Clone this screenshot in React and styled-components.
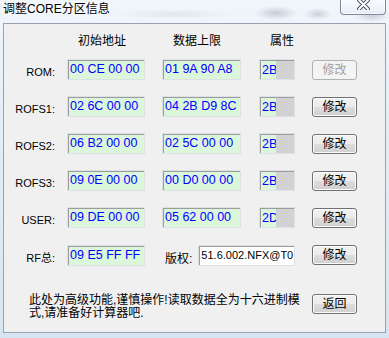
import React from "react";
import styled, { createGlobalStyle } from "styled-components";

const Global = createGlobalStyle`
  html, body { margin: 0; padding: 0; }
  body { width: 389px; height: 338px; overflow: hidden; font-family: "Liberation Sans", "Noto Sans CJK SC", sans-serif; }
`;

const CJK = `"Liberation Sans", "Noto Sans CJK SC", sans-serif`;

const Frame = styled.div`
  width: 389px;
  height: 338px;
  display: flex;
  flex-direction: column;
  box-sizing: border-box;
  background:
    radial-gradient(ellipse 22px 7px at 276px 13px, rgba(90,105,125,0.28), transparent),
    radial-gradient(ellipse 14px 6px at 318px 14px, rgba(90,105,125,0.25), transparent),
    radial-gradient(ellipse 18px 6px at 372px 16px, rgba(90,105,125,0.25), transparent),
    radial-gradient(ellipse 60px 5px at 175px 14px, rgba(110,125,145,0.12), transparent),
    linear-gradient(180deg, #f1f6fb 0%, #e3edf6 40%, #d7e5f2 100%);
`;

const TitleBar = styled.div`
  height: 23px;
  display: flex;
  justify-content: space-between;
  align-items: flex-start;
  flex: none;
`;

const Title = styled.div`
  padding: 2px 0 0 3px;
  font: 12px/14px ${CJK};
  color: #000;
  text-shadow: 0 0 6px #fff, 0 0 3px #fff;
`;

const CloseButton = styled.div`
  width: 46px;
  height: 15px;
  margin-right: 3px;
  box-sizing: border-box;
  border: 1px solid #7d8898;
  border-top: none;
  border-radius: 0 0 4px 4px;
  background: linear-gradient(180deg, rgba(255,255,255,0.55), rgba(225,235,245,0.6));
  box-shadow: inset 0 -1px 0 rgba(255,255,255,0.7), inset 1px 0 0 rgba(255,255,255,0.6), inset -1px 0 0 rgba(255,255,255,0.6);
  display: flex;
  justify-content: center;
  align-items: flex-start;
`;

const Client = styled.div`
  flex: 1;
  margin: 0 3px 5px 3px;
  border: 1px solid #97a3b2;
  background: #f0f0f0;
  padding-top: 10px;
  display: flex;
  flex-direction: column;
  font: 12px/14px ${CJK};
  color: #000;
`;

const cols = "63px 95px 97px 53px 45px";

const HeaderRow = styled.div`
  display: grid;
  grid-template-columns: ${cols};
  height: 14px;
`;

const HeaderCell = styled.div`
  grid-column: ${(p) => p.col};
  padding-left: 11px;
  font-size: 12px;
  line-height: 14px;
`;

const Rows = styled.div`
  display: flex;
  flex-direction: column;
  gap: 16px;
  margin-top: 11px;
`;

const Row = styled.div`
  display: grid;
  grid-template-columns: ${cols};
  height: 21px;
  align-items: center;
`;

const Label = styled.div`
  text-align: right;
  padding-right: 12px;
  padding-top: 5px;
  font-size: 11px;
  line-height: 14px;
  white-space: nowrap;
`;

const Field = styled.div`
  width: ${(p) => p.w}px;
  height: 21px;
  box-sizing: border-box;
  border: 1px solid #dde1e6;
  box-shadow: inset 1px 1px 0 #9c9c9c;
  background: ${(p) => p.bg || "#dcf6dc"};
  color: ${(p) => p.color || "#0000ff"};
  font: ${(p) => p.fs || 12.5}px/19px "Liberation Sans", sans-serif;
  padding-left: 2px;
  white-space: nowrap;
  overflow: hidden;
  display: flex;
`;

const AttrText = styled.span`
  width: 14px;
  background: #dcf6dc;
  margin: 1px 0 0 0;
  line-height: 18px;
`;

const AttrRest = styled.span`
  flex: 1;
  background: #d2d2d2;
  margin: 1px 0 0 0;
`;

const Button = styled.button`
  width: 45px;
  height: 20px;
  box-sizing: border-box;
  padding: 0;
  border: 1px solid ${(p) => (p.disabled ? "#adb2b5" : "#707070")};
  border-radius: 3px;
  background: ${(p) =>
    p.disabled
      ? "#f4f4f4"
      : "linear-gradient(180deg, #f2f2f2 0%, #ebebeb 48%, #dddddd 52%, #cfcfcf 100%)"};
  box-shadow: inset 0 0 0 1px ${(p) => (p.disabled ? "#f4f4f4" : "#fcfcfc")};
  color: ${(p) => (p.disabled ? "#a0a0a0" : "#000")};
  font: 12px/16px ${CJK};
  justify-self: start;
`;

const CopyCell = styled.div`
  grid-column: 3 / span 2;
  display: flex;
  align-items: center;
  gap: 6px;
  padding-left: 3px;
`;

const CopyLabel = styled.span`
  font-size: 12px;
  padding-top: 8px;
`;

const Bottom = styled.div`
  display: flex;
  align-items: flex-start;
  margin-top: 29px;
`;

const Note = styled.div`
  width: 283px;
  padding-left: 25px;
  font: 12px/13px ${CJK};
  white-space: nowrap;
`;

const rows = [
  { label: "ROM:", a: "00 CE 00 00", b: "01 9A 90 A8", c: "2B", disabled: true },
  { label: "ROFS1:", a: "02 6C 00 00", b: "04 2B D9 8C", c: "2B" },
  { label: "ROFS2:", a: "06 B2 00 00", b: "02 5C 00 00", c: "2B" },
  { label: "ROFS3:", a: "09 0E 00 00", b: "00 D0 00 00", c: "2B" },
  { label: "USER:", a: "09 DE 00 00", b: "05 62 00 00", c: "2D" },
];

function CloseGlyph() {
  return (
    <svg width="13" height="10" viewBox="0 0 13 10">
      <path d="M2 0 L11 9 M11 0 L2 9" stroke="#4a5160" strokeWidth="4" strokeLinecap="round" />
      <path d="M2 0 L11 9 M11 0 L2 9" stroke="#ffffff" strokeWidth="2" strokeLinecap="round" />
    </svg>
  );
}

export default function App() {
  return (
    <>
      <Global />
      <Frame>
        <TitleBar>
          <Title>调整CORE分区信息</Title>
          <CloseButton>
            <CloseGlyph />
          </CloseButton>
        </TitleBar>
        <Client>
          <HeaderRow>
            <HeaderCell col={2}>初始地址</HeaderCell>
            <HeaderCell col={3}>数据上限</HeaderCell>
            <HeaderCell col={4}>属性</HeaderCell>
          </HeaderRow>
          <Rows>
            {rows.map((r) => (
              <Row key={r.label}>
                <Label>{r.label}</Label>
                <Field w={78}>{r.a}</Field>
                <Field w={79}>{r.b}</Field>
                <Field w={36} bg="#f0f0f0">
                  <AttrText>{r.c}</AttrText>
                  <AttrRest />
                </Field>
                <Button disabled={r.disabled}>修改</Button>
              </Row>
            ))}
            <Row>
              <Label>RF总:</Label>
              <Field w={78}>09 E5 FF FF</Field>
              <CopyCell>
                <CopyLabel>版权:</CopyLabel>
                <Field w={97} bg="#ffffff" color="#000" fs={11}>51.6.002.NFX@T0</Field>
              </CopyCell>
              <Button>修改</Button>
            </Row>
          </Rows>
          <Bottom>
            <Note>
              此处为高级功能,谨慎操作!读取数据全为十六进制模
              <br />
              式,请准备好计算器吧.
            </Note>
            <Button>返回</Button>
          </Bottom>
        </Client>
      </Frame>
    </>
  );
}
